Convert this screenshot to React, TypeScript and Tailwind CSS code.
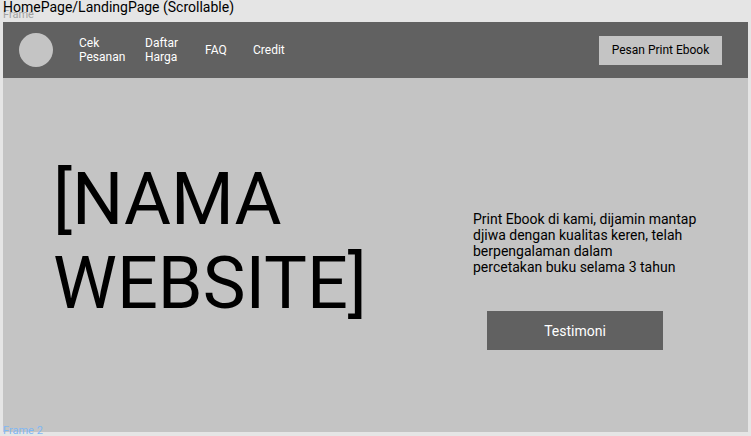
const navLinks = [
  { label: 'Cek Pesanan', width: 'w-[46px]' },
  { label: 'Daftar Harga', width: 'w-10' },
  { label: 'FAQ', width: 'w-7' },
  { label: 'Credit', width: 'w-10' },
];

function Header() {
  return (
    <header className="flex h-14 items-center justify-between bg-[#616161] pr-[26px] pl-4">
      <div className="flex items-center">
        <div className="size-[34px] shrink-0 rounded-full bg-[#c4c4c4]" />
        <nav className="ml-[26px] flex items-center gap-5 text-[12px] leading-[14px] text-white">
          {navLinks.map((link) => (
            <a key={link.label} href="#" className={link.width}>
              {link.label}
            </a>
          ))}
        </nav>
      </div>
      <button
        type="button"
        className="h-[29px] w-[123px] bg-[#c4c4c4] text-[12px] leading-[14px] whitespace-nowrap text-black"
      >
        Pesan Print Ebook
      </button>
    </header>
  );
}

function Hero() {
  return (
    <main className="flex justify-between pr-[49px] pb-[82px] pl-[50px]">
      <h1 className="w-[320px] pt-20 text-[72px] leading-[84px]">[NAMA WEBSITE]</h1>
      <div className="w-[226px] pt-[133px]">
        <p className="text-[14px] leading-[16px]">
          Print Ebook di kami, dijamin mantap djiwa dengan kualitas keren, telah berpengalaman dalam
          <br />
          percetakan buku selama 3 tahun
        </p>
        <button
          type="button"
          className="mt-9 ml-[14px] h-[39px] w-44 bg-[#616161] text-[14px] leading-[16px] text-white"
        >
          Testimoni
        </button>
      </div>
    </main>
  );
}

export default function App() {
  return (
    <div className="min-h-screen bg-[#e5e5e5] px-[3px] font-['Roboto',sans-serif] text-black">
      <div className="relative h-[22px]">
        <span className="absolute top-2 left-0 text-[11px] leading-[14px] text-[#a3a3a3]">Frame</span>
        <p className="relative text-[14px] leading-[14px]">HomePage/LandingPage (Scrollable)</p>
      </div>
      <div className="relative bg-[#c4c4c4]">
        <Header />
        <Hero />
        <span className="absolute -bottom-1 left-0 text-[11px] leading-[10px] text-[#7fb8f5]">
          Frame 2
        </span>
      </div>
    </div>
  );
}
